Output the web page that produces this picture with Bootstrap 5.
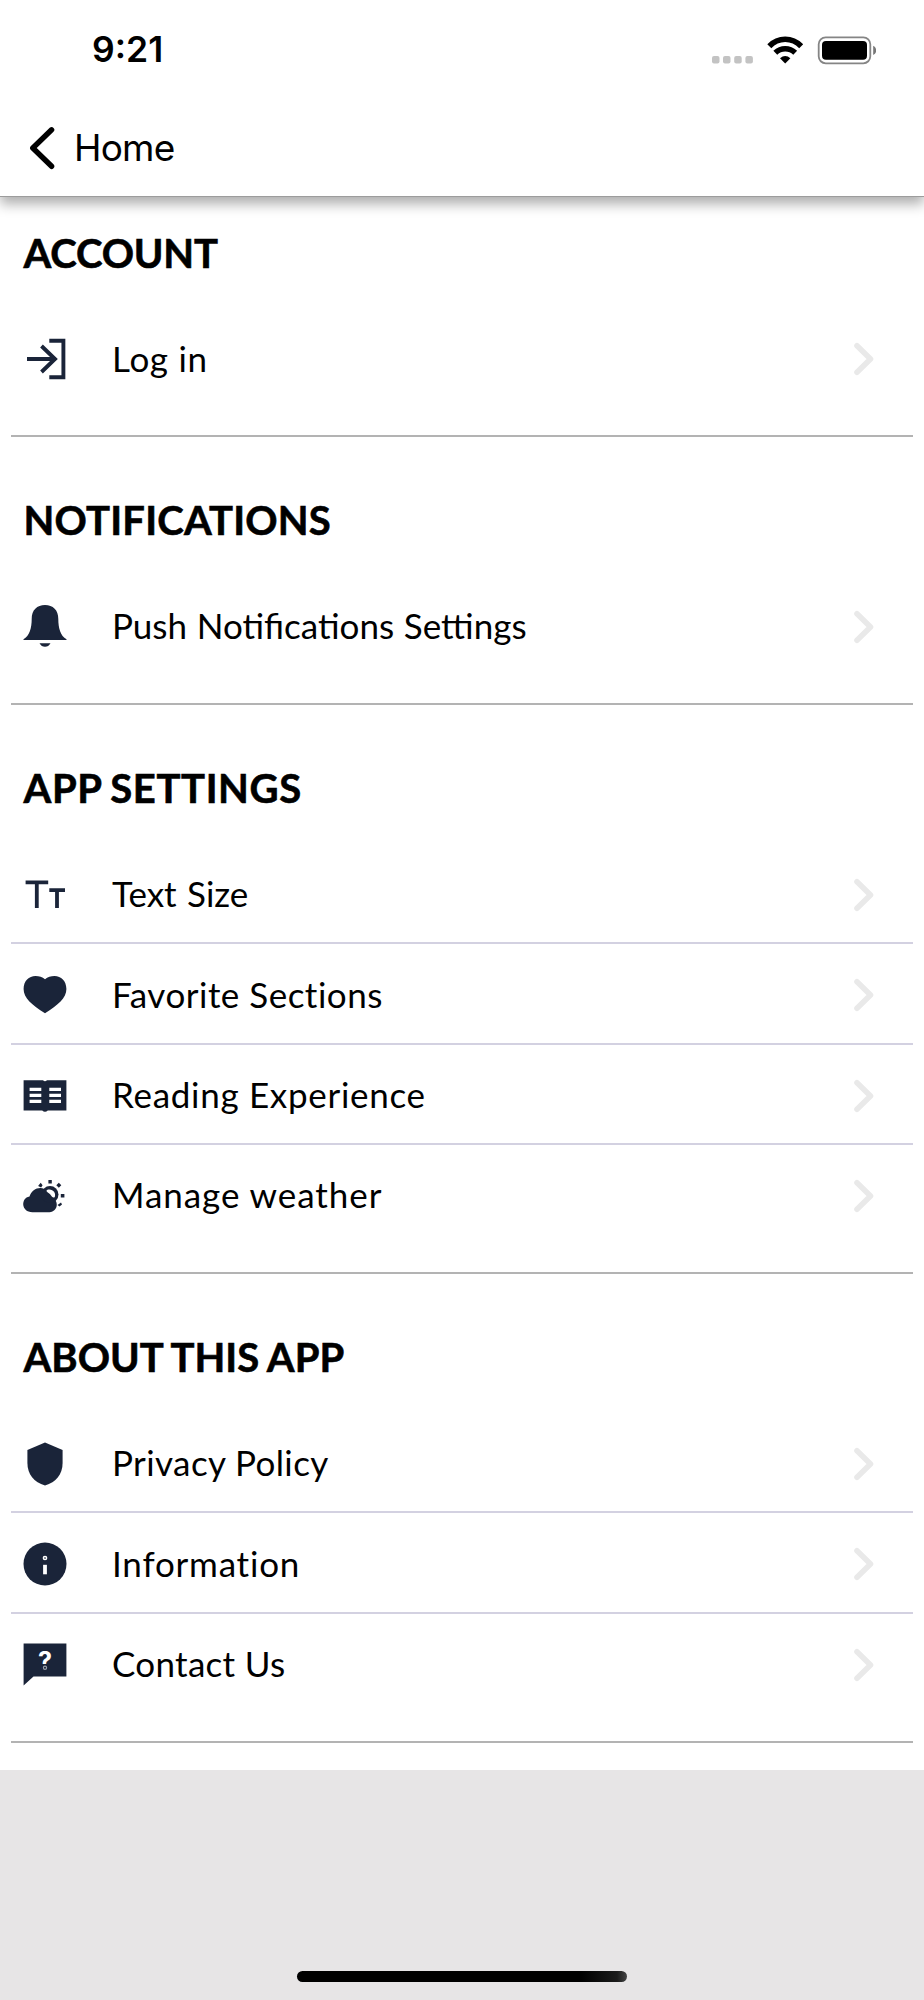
<!DOCTYPE html>
<html lang="en">
<head>
<meta charset="utf-8">
<meta name="viewport" content="width=device-width, initial-scale=1">
<title>Settings</title>
<link href="https://cdn.jsdelivr.net/npm/bootstrap@5.3.0/dist/css/bootstrap.min.css" rel="stylesheet">
<style>
body{background:#e7e5e6;color:#000;font-family:Lato,"Liberation Sans",sans-serif;min-height:2000px}
.app-head{height:197px;background:#fff;border-bottom:1.5px solid #9c9c9c;box-shadow:0 7px 12px rgba(0,0,0,.32);font-family:Inter,sans-serif;z-index:2}
.status{height:100px;padding:0 48px 0 92px}
.clock{font-size:35.5px;font-weight:600;line-height:50px;letter-spacing:0}
.back{height:95px;padding-left:28px;font-size:37px;letter-spacing:-.8px;line-height:50px;color:#000;text-decoration:none}
.back-label{margin-left:16px}
.panel{background:#fff;padding:0 11.5px 27px 11px}
.group{padding:59px 0 26.4px;border-bottom:2px solid #b3b3b3}
.group:first-child{padding-top:31.5px}
.group h2{font-size:40px;line-height:48px;font-weight:700;margin:0 0 32px 12.5px;white-space:nowrap;-webkit-text-stroke:.6px #000}
.item{height:100.4px;padding:3.500px 38px 0 9.5px;border-bottom:2px solid #d3d1e1;color:#000;text-decoration:none}
.item:last-child{border-color:transparent}
.item-label{font-size:35px;line-height:48px;margin:-3.5px 0 0 43.5px;white-space:nowrap}
.ico{width:48px;height:48px;overflow:visible;fill:#1a2439;flex:none}
.chev{width:22px;height:34px;fill:none;stroke:#e9e9e9;stroke-width:5.600;stroke-linecap:round;stroke-linejoin:round}
.home-area{height:230px;padding-bottom:18px}
.home-bar{width:330px;height:11px;background:linear-gradient(90deg,#000 86%,#1b1b1b 97%,#444)}
.t-account{letter-spacing:-.15px}
.t-notifications{letter-spacing:.2px}
.group .t-settings{letter-spacing:.6px;word-spacing:-1.5px}
.group .t-about{letter-spacing:.05px;word-spacing:-.8px}
.t-login{letter-spacing:.7px}
.t-push{word-spacing:.8px}
.t-size{word-spacing:1.5px}
.t-favorite{letter-spacing:.5px}
.t-reading{letter-spacing:.7px}
.t-weather{letter-spacing:.95px}
.t-privacy{letter-spacing:.4px}
.t-info{letter-spacing:.8px}
.t-contact{letter-spacing:.3px}
</style>
</head>
<body>
<header class="app-head position-relative">
  <div class="status d-flex align-items-center justify-content-between">
    <span class="clock">9:21</span>
    <svg width="165" height="30" viewBox="711 35 165 30">
      <g fill="#c3c3c3"><rect x="712" y="56" width="7.5" height="7.5" rx="2"/><rect x="723" y="56" width="7.5" height="7.5" rx="2"/><rect x="734.2" y="56" width="7.5" height="7.5" rx="2"/><rect x="745.4" y="56" width="7.5" height="7.5" rx="2"/></g>
      <g fill="none" stroke="#000" stroke-width="5.600"><path d="M769.3 46.2Q776 39.3 785.2 39.3T801.200 46.2"/><path d="M775.3 52.800Q779.500 48.800 785.2 48.800T795.2 52.800"/></g>
      <path d="M780 58.200Q785.200 53.800 790.400 58.200L785.200 63.500z"/>
      <rect x="818.700" y="37.300" width="51.600" height="26" rx="7" fill="none" stroke="#858585" stroke-width="1.800"/>
      <rect x="822" y="41" width="45" height="18.800" rx="4"/><path d="M873.200 45.800q3 1.500 3 4.600t-3 4.600z" fill="#777"/>
    </svg>
  </div>
  <a class="back d-flex align-items-center" href="#">
    <svg width="30" height="44" viewBox="28 125 30 44" fill="none" stroke="#000" stroke-width="5.400" stroke-linecap="round" stroke-linejoin="round"><path d="M51.600 128.800L32.800 147L51.600 165.300"/></svg>
    <span class="back-label">Home</span>
  </a>
</header>
<main class="panel">
  <section class="group"><h2 class="t-account">ACCOUNT</h2>
    <a class="item d-flex align-items-center" href="#"><svg class="ico" viewBox="-24 -24 48 48"><path d="M-18 0H10M-3.500 -13L10 0L-3.500 13M4.300 -18.300H18.400V18.300H4.300" fill="none" stroke="#1a2439" stroke-width="3.900"/></svg><span class="item-label t-login">Log in</span><svg class="chev ms-auto" viewBox="0 0 22 34"><path d="M4 3.800L17.500 17L4 30.200"/></svg></a>
  </section>
  <section class="group"><h2 class="t-notifications">NOTIFICATIONS</h2>
    <a class="item d-flex align-items-center" href="#"><svg class="ico" viewBox="-24 -24 48 48"><path d="M-21.500 13V12.300C-15.500 9-13.300 1-13.300 -8C-13.300 -17-8-22 0 -22S13.300 -17 13.300 -8C13.300 1 15.500 9 21.500 12.300V13zM-5.500 16.200H5.500Q3.500 19.800 0 19.800T-5.500 16.200z"/></svg><span class="item-label t-push">Push Notifications Settings</span><svg class="chev ms-auto" viewBox="0 0 22 34"><path d="M4 3.800L17.500 17L4 30.200"/></svg></a>
  </section>
  <section class="group"><h2 class="t-settings">APP SETTINGS</h2>
    <a class="item d-flex align-items-center" href="#"><svg class="ico" viewBox="-24 -24 48 48"><path d="M-19.400 -12.600H3.200M-8.200 -12.600V13M4.300 -4.800H20M12 -4.800V13" fill="none" stroke="#1a2439" stroke-width="3.800"/></svg><span class="item-label t-size">Text Size</span><svg class="chev ms-auto" viewBox="0 0 22 34"><path d="M4 3.800L17.500 17L4 30.200"/></svg></a>
    <a class="item d-flex align-items-center" href="#"><svg class="ico" viewBox="-24 -24 48 48"><path d="M0 18.300C-13 10-21.400 3-21.400 -6C-21.400 -14-16-19-9.500 -19Q-4 -19 0 -15.800Q4 -19 9.500 -19C16 -19 21.400 -14 21.400 -6C21.400 3 13 10 0 18.300z"/></svg><span class="item-label t-favorite">Favorite Sections</span><svg class="chev ms-auto" viewBox="0 0 22 34"><path d="M4 3.800L17.500 17L4 30.200"/></svg></a>
    <a class="item d-flex align-items-center" href="#"><svg class="ico" viewBox="-24 -24 48 48"><path d="M-21.400 -15.800H-2Q0 -13.500 2 -15.800H21.400V14.500H2.800Q0 17 -2.800 14.500H-21.400z"/><path fill="#fff" d="M-15.400 -8.300h11.700v3.300h-11.700zm0 6h11.700v3.300h-11.700zm0 6h11.700v3.300h-11.700zM4.300 -8.300H16v3.300H4.300zm0 6H16v3.300H4.300zm0 6H16v3.300H4.300z"/></svg><span class="item-label t-reading">Reading Experience</span><svg class="chev ms-auto" viewBox="0 0 22 34"><path d="M4 3.800L17.500 17L4 30.200"/></svg></a>
    <a class="item d-flex align-items-center" href="#"><svg class="ico" viewBox="-24 -24 48 48"><path d="M-12.500 16.200C-24 16.200-24.500 2-15.500 .5C-13.500 -6-6-10-.5 -6.800C5 -4.500 6.500 -1 7.500 2C13.800 4.500 13.500 15.500 4.500 16.200z"/><circle cx="5" cy="-1.500" r="8.500"/><path fill="#fff" d="M2 -6C7 -8 11.500 -3.500 9.800 1Q8.500 2.300 7 .8Q5 -2.500 2.500 -3.800Q.5 -5 2 -6z"/><path d="M3.400 -16h3.400v3.400h-3.400zM15.800 -2h3.600v3.600h-3.600zM13.800 -13.300l2.500 2.500l-2.500 2.500l-2.500 -2.500zM-4.300 -13.300l1.900 2.500l-1.500 2.200l-3 -1.300zM16 6.500l1 2l-2.500 2l-2 -1.500z"/></svg><span class="item-label t-weather">Manage weather</span><svg class="chev ms-auto" viewBox="0 0 22 34"><path d="M4 3.800L17.500 17L4 30.200"/></svg></a>
  </section>
  <section class="group"><h2 class="t-about">ABOUT THIS APP</h2>
    <a class="item d-flex align-items-center" href="#"><svg class="ico" viewBox="-24 -24 48 48"><path d="M0 -21.500L17.600 -14V-1C17.600 10 11 18.500 0 21.500C-11 18.500-17.600 10-17.600 -1V-14z"/></svg><span class="item-label t-privacy">Privacy Policy</span><svg class="chev ms-auto" viewBox="0 0 22 34"><path d="M4 3.800L17.500 17L4 30.200"/></svg></a>
    <a class="item d-flex align-items-center" href="#"><svg class="ico" viewBox="-24 -24 48 48"><circle r="21.500"/><circle cy="-6" r="1.600" fill="#1a2439" stroke="#fff" stroke-width="1.500"/><path fill="#fff" d="M-1.900 .8H1.900V10.300H-1.900z"/></svg><span class="item-label t-info">Information</span><svg class="chev ms-auto" viewBox="0 0 22 34"><path d="M4 3.800L17.500 17L4 30.200"/></svg></a>
    <a class="item d-flex align-items-center" href="#"><svg class="ico" viewBox="-24 -24 48 48"><path d="M-21.400 -21.500H21.400V11.500H-11.500L-21.400 20.500z"/><text x="0" y="4.500" text-anchor="middle" font-family="Inter" font-weight="700" font-size="25" fill="#fff">?</text><circle cy="2.700" r="3.300"/><circle cy="2.800" r="1.600" fill="none" stroke="#9aa0ab" stroke-width="1.200"/></svg><span class="item-label t-contact">Contact Us</span><svg class="chev ms-auto" viewBox="0 0 22 34"><path d="M4 3.800L17.500 17L4 30.200"/></svg></a>
  </section>
</main>
<footer class="home-area d-flex align-items-end justify-content-center"><div class="home-bar rounded-pill"></div></footer>
<script src="https://cdn.jsdelivr.net/npm/bootstrap@5.3.0/dist/js/bootstrap.bundle.min.js"></script>
</body>
</html>
